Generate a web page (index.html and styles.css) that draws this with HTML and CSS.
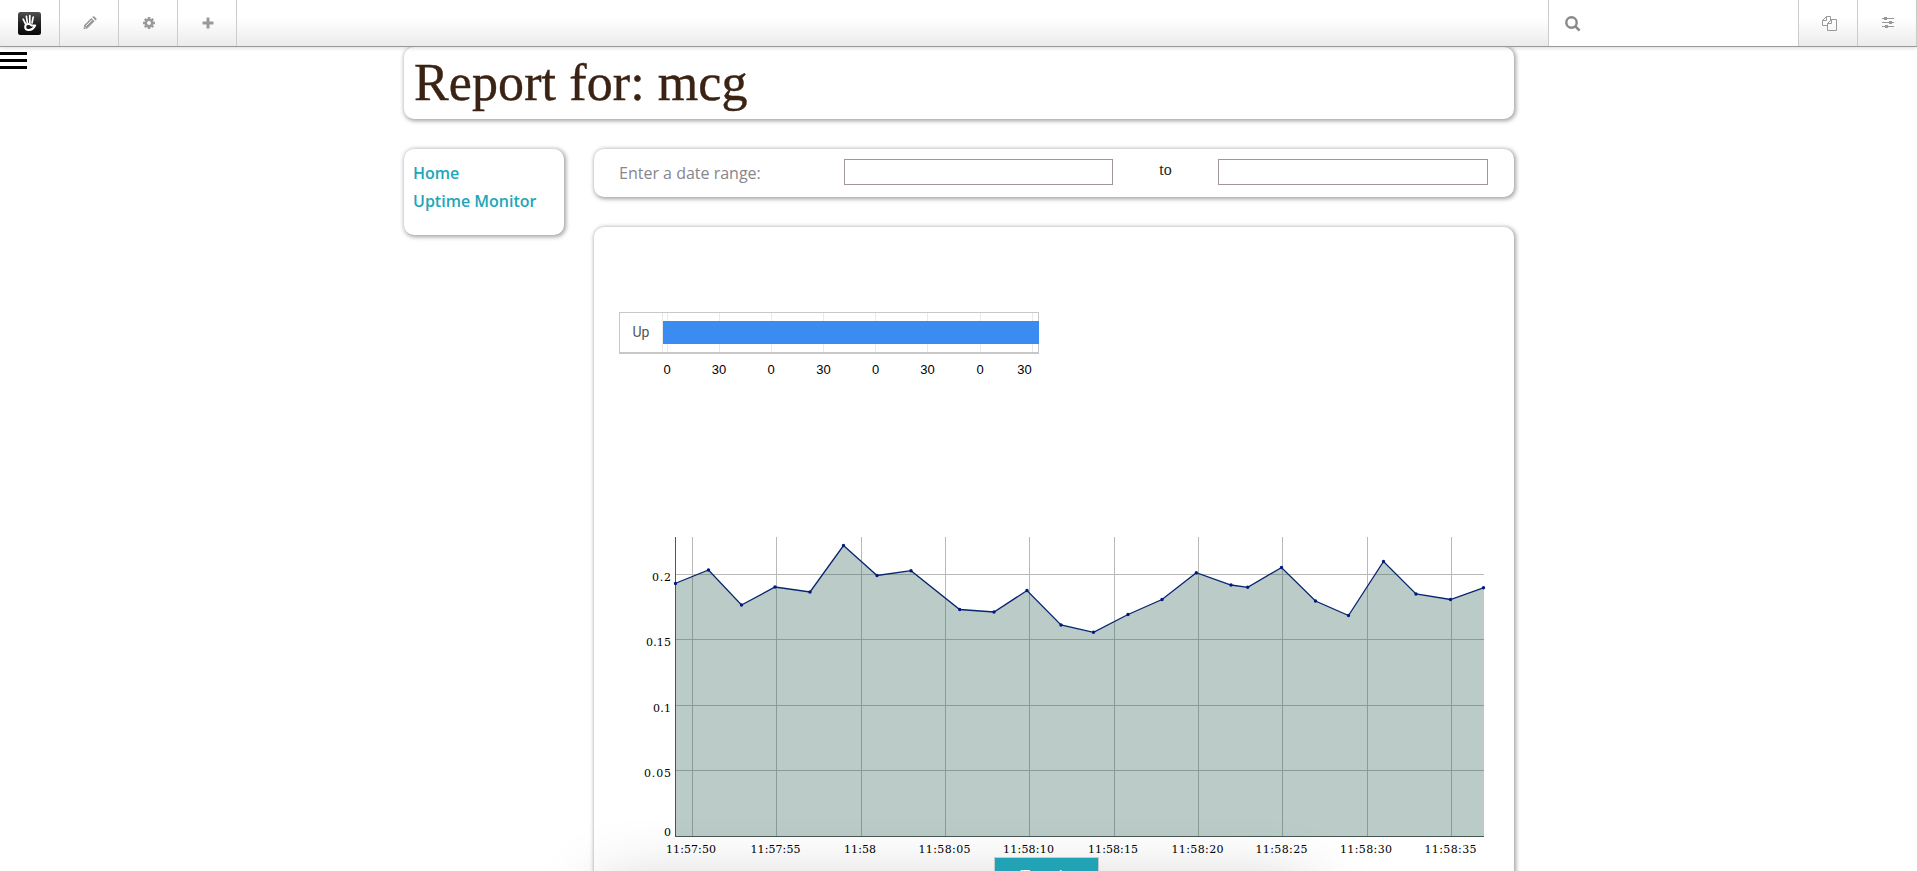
FILE: index.html
```html
<!DOCTYPE html>
<html lang="en">
<head>
<meta charset="utf-8">
<title>Report for: mcg</title>
<link rel="stylesheet" href="styles.css">
</head>
<body>
<header class="toolbar">
  <div class="tool"><svg width="23" height="23" viewBox="0 0 23 23"><defs><linearGradient id="lg" x2="0" y2="1"><stop stop-color="#505050"/><stop offset=".5" stop-color="#222"/><stop offset="1" stop-color="#080808"/></linearGradient></defs><rect width="23" height="23" rx="2.500" fill="url(#lg)"/><g fill="none" stroke="#fff" stroke-linecap="round"><path d="M5.200 7.200L7.600 12M8.400 4.400L9.400 11M11.800 3.600V11M15.200 5.200L14 11" stroke-width="1.700"/><path d="M17.200 13.600h-3.400C11 10.800 7 12 7.200 15.200c.3 4 6.600 4 9.600-1" stroke-width="2"/></g></svg></div>
  <div class="tool"><svg width="14" height="14" viewBox="0 0 14 14" fill="#999"><path d="M1 9.300L8.300 2l3.300 3.300L4.300 12.600.7 13.200zM9.200 1.100l.6-.6q.8-.7 1.600 0l1.800 1.800q.7.8 0 1.600l-.6.6z"/><path d="M3 9.900l6-6M1.700 11l1.100 1.100" stroke="#fff" stroke-width=".9"/></svg></div>
  <div class="tool"><svg width="12" height="12" viewBox="0 0 12 12"><circle cx="6" cy="6" r="3.200" fill="none" stroke="#999" stroke-width="2.500"/><path d="M6 0v2M6 10v2M0 6h2M10 6h2M1.800 1.800l1.400 1.400M8.800 8.800l1.400 1.400M1.800 10.200l1.400-1.400M8.800 3.200l1.400-1.400" stroke="#999" stroke-width="2.500"/></svg></div>
  <div class="tool"><svg width="12" height="12" viewBox="0 0 12 12" fill="#999"><path d="M5 .5h2q.5 0 .5.5v3.500H11q.5 0 .5.500v2q0 .5-.5.500H7.500V11q0 .5-.5.500H5q-.5 0-.5-.5V7.500H1q-.5 0-.5-.5V5q0-.5.500-.5h3.500V1q0-.5.500-.5z"/></svg></div>
  <div class="search"><svg width="16" height="16" viewBox="0 0 16 16" fill="none" stroke="#888"><circle cx="6.500" cy="6.500" r="5.200" stroke-width="2.400"/><path d="M10.400 10.400l4.200 4.200" stroke-width="2.600"/></svg></div>
  <div class="tool"><svg width="15" height="15" viewBox="0 0 15 15" fill="none" stroke="#999"><path d="M5.500 9.500h-5v-5l4-4h4v4M4.500.5v4h-4M5.500 14.500v-7l4-4h5v11zM9.500 3.500v4h-4"/></svg></div>
  <div class="tool"><svg width="12" height="12" viewBox="0 0 12 12" fill="#999"><path d="M0 1h12v1H0zM0 5h12v1H0zM0 9h12v1H0zM2 0h3v3H2zM7 4h3v3H7zM3 8h3v3H3z"/></svg></div>
</header>
<div class="burger"><i></i><i></i><i></i></div>

<main class="page">
  <div class="card title"><h1>Report for: mcg</h1></div>
  <div class="columns">
    <nav class="card nav"><a>Home</a><a>Uptime Monitor</a></nav>
    <div class="content">
      <form class="card range">
        <label>Enter a date range:</label>
        <input type="text"><span>to</span><input type="text">
      </form>
      <section class="card report">
        <svg class="timeline" width="422" height="70" viewBox="619 312 422 70">
          <g shape-rendering="crispEdges">
            <path d="M662 313v40M667.500 313v40M719.500 313v40M771.500 313v40M823.500 313v40M875.500 313v40M927.500 313v40M980 313v40M1032 313v40" stroke="#e9e9e9"/>
            <path d="M619 312.500h420M619.500 312v42M1038.500 312v42" stroke="#c8c8c8"/>
            <path d="M619 353h420" stroke="#c8c8c8" stroke-width="2"/>
            <rect x="663" y="321" width="376" height="23" fill="#3b8cf0"/>
          </g>
          <text class="rowname" x="632.500" y="337">Up</text>
          <g class="secs"><text x="667" y="374">0</text><text x="719" y="374">30</text><text x="771" y="374">0</text><text x="823.500" y="374">30</text><text x="875.500" y="374">0</text><text x="927.500" y="374">30</text><text x="980" y="374">0</text><text x="1024.500" y="374">30</text></g>
        </svg>
        <svg class="chart" width="870" height="330" viewBox="619 534 870 330">
          <path d="M692.500 537v299M776.500 537v299M861.500 537v299M945.500 537v299M1029.500 537v299M1114.500 537v299M1198.500 537v299M1282.500 537v299M1367.500 537v299M1451.500 537v299M675 574.500h809M675 639.500h809M675 705.500h809M675 770.500h809" stroke="#b9b9b9"/>
          <path d="M675.500 537v300M675 836.500h809" stroke="#555"/>
          <path d="M675 583.500L708.500 570 741.500 605 775 587 810 592 843.500 545.500 877 575.500 911 570.700 959.700 609.500 994 612 1027 590.500 1061 625 1093.500 632.300 1128 614.500 1162 599.500 1196.300 572.700 1231 585 1247.700 587.300 1281.500 567.500 1315.500 601 1348.500 615.500 1383.500 561.500 1416 594 1450.500 599.500 1484 587.700V837H675z" fill="#2a5c50" fill-opacity=".32"/>
          <g fill="none" stroke="#06246f" stroke-width="1.300">
            <path d="M675 583.500L708.500 570 741.500 605 775 587 810 592 843.500 545.500 877 575.500 911 570.700 959.700 609.500 994 612 1027 590.500 1061 625 1093.500 632.300 1128 614.500 1162 599.500 1196.300 572.700 1231 585 1247.700 587.300 1281.500 567.500 1315.500 601 1348.500 615.500 1383.500 561.500 1416 594 1450.500 599.500 1484 587.700"/>
            <path stroke="#001a80" stroke-width="3.400" stroke-linecap="round" d="M675.500 583.500h0M708.500 570h0M741.500 605h0M775 587h0M810 592h0M843.500 545.500h0M877 575.500h0M911 570.700h0M959.700 609.500h0M994 612h0M1027 590.500h0M1061 625h0M1093.500 632.300h0M1128 614.500h0M1162 599.500h0M1196.300 572.700h0M1231 585h0M1247.700 587.300h0M1281.500 567.500h0M1315.500 601h0M1348.500 615.500h0M1383.500 561.500h0M1416 594h0M1450.500 599.500h0M1483.500 587.700h0"/>
          </g>
          <g class="ylab"><text x="671" y="581" textLength="19">0.2</text><text x="671" y="646" textLength="25">0.15</text><text x="671" y="712" textLength="18">0.1</text><text x="671" y="777" textLength="27">0.05</text><text x="671" y="836">0</text></g>
          <g class="xlab"><text x="691" y="853" textLength="50">11:57:50</text><text x="775.500" y="853" textLength="50">11:57:55</text><text x="860" y="853" textLength="32">11:58</text><text x="944.500" y="853" textLength="52">11:58:05</text><text x="1028.500" y="853" textLength="51">11:58:10</text><text x="1113" y="853" textLength="50">11:58:15</text><text x="1197.500" y="853" textLength="52">11:58:20</text><text x="1281.500" y="853" textLength="52">11:58:25</text><text x="1366" y="853" textLength="52">11:58:30</text><text x="1450.500" y="853" textLength="52">11:58:35</text></g>
        </svg>
      </section>
    </div>
  </div>
</main>
<div class="drawer-shadow"></div>
<button class="toggle">Toggle</button>
</body>
</html>
```
FILE: styles.css
```css
* { box-sizing: border-box; }
body {
  margin: 0;
  height: 871px;
  overflow: hidden;
  position: relative;
  background: #fff;
  font-family: "Liberation Serif", serif;
}
.toolbar {
  position: relative;
  z-index: 2;
  display: flex;
  height: 47px;
  border-bottom: 1px solid #999;
  background: linear-gradient(#fff 40%, #ebebeb);
  box-shadow: 0 1px 4px rgba(0, 0, 0, .15);
}
.tool, .search { display: flex; align-items: center; border-right: 1px solid #ccc; }
.tool { width: 59px; padding-left: 2px; justify-content: center; }
.tool:first-child { width: 60px; padding-left: 0; }
.search {
  width: 251px;
  margin-left: auto;
  padding: 1px 0 0 16px;
  border-left: 1px solid #ccc;
  background: #fff;
}
.burger { position: absolute; left: 0; top: 52px; display: grid; gap: 4px; }
.burger i { width: 27px; height: 3px; background: #000; }

.page { width: 1110px; margin-left: 404px; }
.card {
  background: #fff;
  border-radius: 10px;
  box-shadow: 1px 1px 4px 1px rgba(0, 0, 0, .36);
}
.title { height: 72px; padding-left: 10px; }
h1 {
  margin: 0;
  font-weight: 400;
  font-size: 52px;
  line-height: 72px;
  letter-spacing: .1px;
  color: #3b2314;
  -webkit-text-stroke: .4px #3b2314;
}
.columns { display: flex; gap: 30px; margin-top: 30px; align-items: flex-start; }
.nav {
  width: 160px;
  height: 86px;
  padding: 10px 9px;
  display: flex;
  flex-direction: column;
  font: 600 16px/28px "Open Sans", sans-serif;
  color: #21a6b8;
  white-space: nowrap;
}
.content { width: 920px; display: grid; gap: 30px; }
.range { height: 48px; padding: 10px 26px 0 25px; display: flex; align-items: flex-start; }
.range label {
  width: 225px;
  font: 16px/28px "Open Sans", sans-serif;
  color: #85868e;
}
.range input {
  width: 269px;
  height: 26px;
  border: 1px solid #a39698;
  background: #fff;
}
.range input:last-child { width: 270px; }
.range span {
  width: 105px;
  text-align: center;
  font-size: 16px;
  line-height: 21px;
  color: #222;
}
.report { height: 700px; padding: 85px 0 0 25px; }
.timeline, .chart { display: block; }
.chart { margin-top: 152px; }
.timeline text { font-family: "Liberation Sans", sans-serif; font-size: 13px; fill: #000; }
.timeline .rowname { font-family: Roboto, sans-serif; font-size: 14px; fill: #555; }
.secs text, .xlab text { text-anchor: middle; }
.chart text { font-family: "DejaVu Serif", serif; font-size: 11px; fill: #000; }
.ylab text { text-anchor: end; }

.drawer-shadow {
  position: absolute;
  left: 600px;
  top: 890px;
  width: 710px;
  height: 200px;
  background: #fff;
  box-shadow: 0 0 70px rgba(0, 0, 0, .24);
}
.toggle {
  position: absolute;
  left: 994px;
  top: 857px;
  width: 105px;
  height: 40px;
  padding: 7px 0 0;
  border: 1px solid #c4cccc;
  background: #21a3b5;
  color: #fff;
  font: 17px/22px "Open Sans", sans-serif;
  display: flex;
  align-items: flex-start;
  justify-content: center;
}
```
